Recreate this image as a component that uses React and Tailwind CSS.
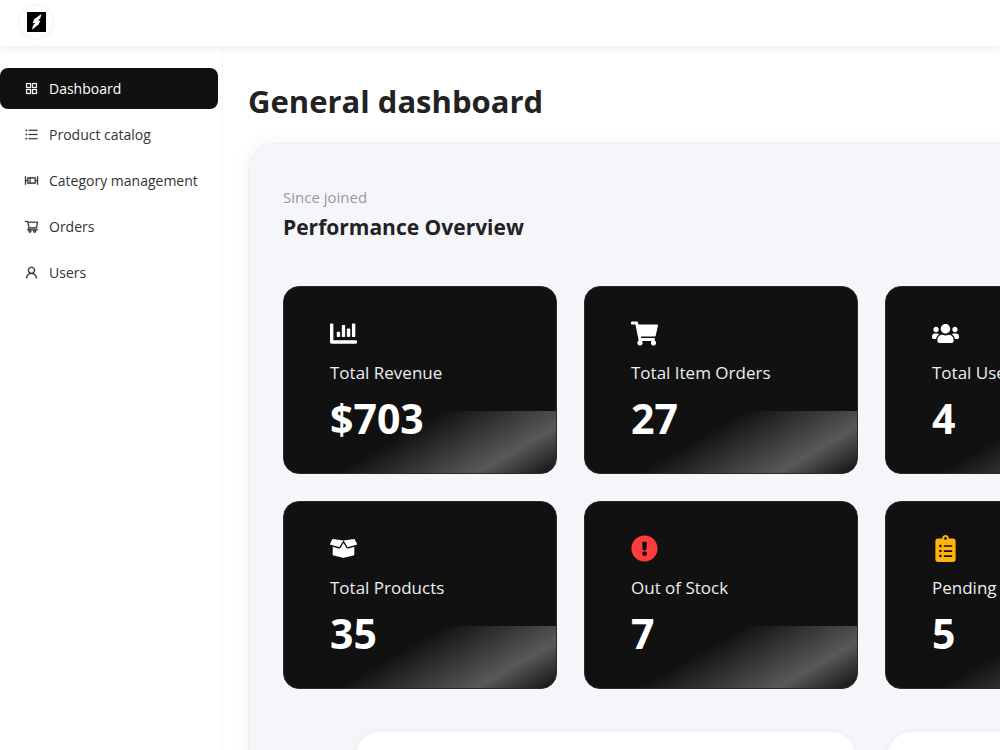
import {
  AiOutlineAppstore,
  AiOutlineUnorderedList,
  AiOutlineBoxPlot,
  AiOutlineShoppingCart,
  AiOutlineUser,
} from "react-icons/ai"
import {
  FaChartBar,
  FaShoppingCart,
  FaUsers,
  FaBoxOpen,
  FaExclamationCircle,
  FaClipboardList,
} from "react-icons/fa"

const menu = [
  { label: 'Dashboard', icon: AiOutlineAppstore },
  { label: 'Product catalog', icon: AiOutlineUnorderedList },
  { label: 'Category management', icon: AiOutlineBoxPlot },
  { label: 'Orders', icon: AiOutlineShoppingCart },
  { label: 'Users', icon: AiOutlineUser },
]

const statRows = [
  [
    { label: 'Total Revenue', value: '$703', icon: FaChartBar, color: 'text-white' },
    { label: 'Total Item Orders', value: '27', icon: FaShoppingCart, color: 'text-white' },
    { label: 'Total Users', value: '4', icon: FaUsers, color: 'text-white' },
  ],
  [
    { label: 'Total Products', value: '35', icon: FaBoxOpen, color: 'text-white' },
    { label: 'Out of Stock', value: '7', icon: FaExclamationCircle, color: 'text-[#ff3b3b]' },
    { label: 'Pending Orders', value: '5', icon: FaClipboardList, color: 'text-[#ffb30f]' },
  ],
]

function Logo() {
  return (
    <a
      href="#"
      aria-label="Home"
      className="flex size-8 items-center justify-center rounded-full bg-white shadow-[0_0_4px_rgba(0,0,0,0.1)]"
    >
      <svg width="19" height="20" viewBox="0 0 19 20">
        <rect width="19" height="20" fill="#000" />
        <path d="M14.4 2 7.4 7 5.6 11.2 8.4 10.8 6 13.4 5 17.8 11.6 12.6 13.4 8.4 10.8 8.8 13.4 6Z" fill="#fff" />
      </svg>
    </a>
  )
}

function MenuItem({ item, active }) {
  const Icon = item.icon
  return (
    <a
      href="#"
      className={`flex h-[41px] items-center gap-[10px] rounded-lg pl-6 text-sm ${
        active ? 'bg-[#111] text-white' : 'text-[#333]'
      }`}
    >
      <Icon size={15} strokeWidth={16} />
      {item.label}
    </a>
  )
}

function StatCard({ stat }) {
  const Icon = stat.icon
  return (
    <div className="relative h-[188px] overflow-hidden rounded-2xl border border-[#2a2a2a] bg-[#111] px-[46px] pt-[33px] text-white">
      <Icon size={27} className={stat.color} />
      <p className="mt-3 text-[17px] leading-7 whitespace-nowrap text-[#eee]">{stat.label}</p>
      <p className="mt-[3px] text-[41px] leading-[56px] font-bold">{stat.value}</p>
      {/* Shine */}
      <div className="pointer-events-none absolute inset-x-0 bottom-0 h-1/3 bg-[linear-gradient(150deg,transparent_42%,rgba(255,255,255,0.3)_79%,transparent_100%)]" />
    </div>
  )
}

export default function App() {
  return (
    <div className="flex h-screen flex-col overflow-hidden bg-white font-['Open_Sans','Noto_Sans',sans-serif] text-[#222]">
      <header className="z-10 flex h-[46px] shrink-0 items-center bg-white px-5 pb-[2px] shadow-[0_1px_8px_rgba(0,0,0,0.1)]">
        <Logo />
      </header>

      <div className="flex min-h-0 grow">
        {/* Sidebar */}
        <nav className="flex w-[223px] shrink-0 flex-col gap-[5px] border-r border-[#f5f5f5] pt-[22px] pr-1">
          {menu.map((item, i) => (
            <MenuItem key={item.label} item={item} active={i === 0} />
          ))}
        </nav>

        <main className="min-w-0 grow overflow-hidden pt-8 pl-[25px]">
          <h1 className="text-[31px] leading-[46px] font-bold">General dashboard</h1>

          <section className="mt-[19px] w-max rounded-[27px] border border-[#f0f0f3] bg-[#f5f6fa] px-[34px] pt-[41px] shadow-[0_0_20px_rgba(0,0,0,0.06)]">
            <p className="text-[15px] leading-6 text-[#999]">Since joined</p>
            <h2 className="text-[21px] leading-9 font-bold">Performance Overview</h2>

            {/* Stats */}
            <div className="mt-[41px] flex flex-col gap-[27px]">
              {statRows.map((row, i) => (
                <div key={i} className="grid grid-cols-[repeat(4,274px)] gap-[27px]">
                  {row.map((stat) => (
                    <StatCard key={stat.label} stat={stat} />
                  ))}
                </div>
              ))}
            </div>

            {/* Charts */}
            <div className="mt-[43px] flex justify-center gap-[33px]">
              <div className="h-80 w-[499px] rounded-3xl bg-white shadow-[0_0_8px_rgba(0,0,0,0.04)]" />
              <div className="h-80 w-[499px] rounded-3xl bg-white shadow-[0_0_8px_rgba(0,0,0,0.04)]" />
            </div>
          </section>
        </main>
      </div>
    </div>
  )
}
